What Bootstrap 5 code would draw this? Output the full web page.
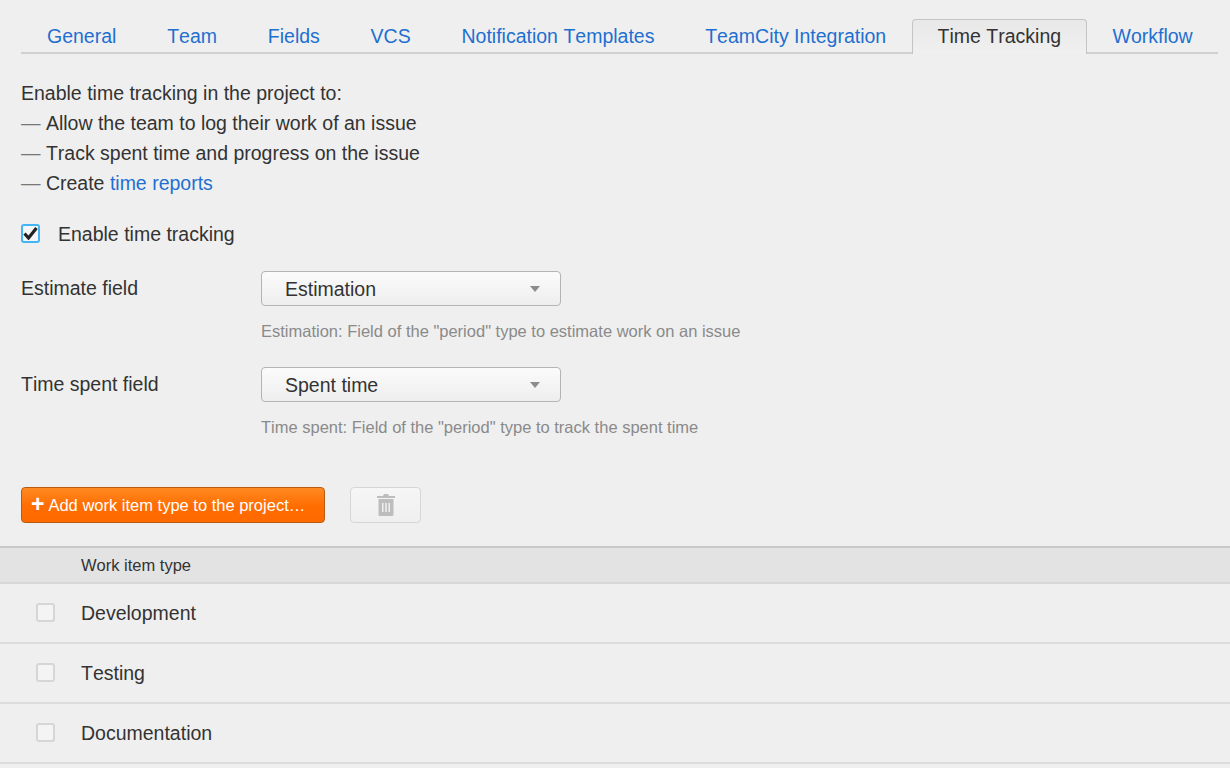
<!DOCTYPE html>
<html lang="en">
<head>
<meta charset="utf-8">
<title>Time Tracking</title>
<link href="https://cdn.jsdelivr.net/npm/bootstrap@5.3.0/dist/css/bootstrap.min.css" rel="stylesheet">
<style>
html,body{height:100%}
body{background:#efefef;color:#333;font-family:"Liberation Sans",Arial,sans-serif;font-size:19.5px;line-height:30px;overflow:hidden;font-kerning:none}
a{color:#1f6fd0;text-decoration:none}
.tabbar{margin:18px 12px 0 21px;height:36px;border-bottom:2px solid #d0d0d0;flex-wrap:nowrap;white-space:nowrap}
.tabbar .nav-link{color:#1f6fd0;font-size:19.5px;line-height:30px;height:36px;padding:3px 25.4px 2px 25.4px;border:0;border-radius:0;background:none;margin:0}
.tabbar .nav-item:first-child .nav-link{padding-left:26px}
.tabbar .nav-link.active{color:#333;padding:1px 25px 2px 25px;margin-top:1px;height:35px;border:1px solid #c4c4c4;border-bottom:0;border-radius:4px 4px 0 0;background:linear-gradient(#e8e8e8,#f0f0f0)}
.tabbar .nav-item:has(.active){margin-bottom:-2px}
.intro{margin:24px 0 0 21px}
.dash{color:#777}
.chk-row{margin:21px 0 0 21px;height:30px}
.chk{width:19px;height:19px;flex:none;border-radius:3px;background:#f4f4f4;border:2px solid #d6d6d6}
.chk-on{border:2px solid #45b4f5;background:#f6f6f6;margin-right:18px;margin-top:-1px}
.chk-on svg{flex:none}
.field-row{margin-left:21px}
.field-one{margin-top:22px}
.field-two{margin-top:24px}
.field-label{width:240px;flex:none;line-height:26px;padding-top:4px}
.picker{width:300px;height:35px;padding:1px 20px 0 23px;border:1px solid #b4b4b4;border-radius:4px;background:linear-gradient(#fbfbfb,#eeeeee);color:#333;font-size:19.5px;line-height:33px}
.caret{width:0;height:0;border-left:5px solid transparent;border-right:5px solid transparent;border-top:6px solid #8c8c8c;margin-bottom:1px}
.hint{color:#8a8a8a;font-size:16.5px;line-height:24px;margin-top:13px;white-space:nowrap}
.actions{margin:48px 0 0 21px}
.add-btn{width:304px;height:36px;padding:0 0 0 9px;border:1px solid #b85a10;border-radius:4px;background:linear-gradient(#ff8a22,#ff6c00 55%,#ff6a00);color:#fff;font-size:16.5px;line-height:34px;text-align:left;white-space:nowrap}
.add-btn:hover,.add-btn:active{background:linear-gradient(#ff8a22,#ff6c00 55%,#ff6a00);border-color:#b85a10;color:#fff}
.plus{font-size:23px;font-weight:700;vertical-align:-1px;margin-right:4px;line-height:20px}
.trash-btn{width:71px;height:36px;margin-left:25px;padding:0;border:1px solid #d6d6d6;border-radius:4px;background:linear-gradient(#f6f6f6,#efefef)}
.thead-row{margin-top:23px;height:38px;background:#e3e3e3;border-top:2px solid #c8c8c8;border-bottom:2px solid #d8d8d8;font-size:16.5px;line-height:34px;padding-left:81px}
.item-row{height:60px;border-bottom:2px solid #dcdcdc;padding-left:36px}
.item-row .chk{margin-right:26px;margin-top:-2px}
.item-row span{line-height:30px}
</style>
</head>
<body>
<ul class="nav nav-tabs tabbar">
  <li class="nav-item"><a class="nav-link" href="#">General</a></li>
  <li class="nav-item"><a class="nav-link" href="#">Team</a></li>
  <li class="nav-item"><a class="nav-link" href="#">Fields</a></li>
  <li class="nav-item"><a class="nav-link" href="#">VCS</a></li>
  <li class="nav-item"><a class="nav-link" href="#">Notification Templates</a></li>
  <li class="nav-item"><a class="nav-link" href="#">TeamCity Integration</a></li>
  <li class="nav-item"><a class="nav-link active" href="#">Time Tracking</a></li>
  <li class="nav-item"><a class="nav-link" href="#">Workflow</a></li>
</ul>
<div class="intro">
  <div>Enable time tracking in the project to:</div>
  <div><span class="dash">—</span> Allow the team to log their work of an issue</div>
  <div><span class="dash">—</span> Track spent time and progress on the issue</div>
  <div><span class="dash">—</span> Create <a href="#">time reports</a></div>
</div>
<div class="chk-row d-flex align-items-center">
  <span class="chk chk-on d-flex align-items-center justify-content-center">
    <svg width="15" height="13" viewBox="0 0 15 13"><path d="M1.500 6.500 L5.500 11 L13.500 1" fill="none" stroke="#222" stroke-width="3.200"/></svg>
  </span>
  <span>Enable time tracking</span>
</div>
<div class="field-row field-one d-flex">
  <div class="field-label">Estimate field</div>
  <div>
    <div class="picker d-flex align-items-center justify-content-between"><span>Estimation</span><span class="caret"></span></div>
    <div class="hint">Estimation: Field of the "period" type to estimate work on an issue</div>
  </div>
</div>
<div class="field-row field-two d-flex">
  <div class="field-label">Time spent field</div>
  <div>
    <div class="picker d-flex align-items-center justify-content-between"><span>Spent time</span><span class="caret"></span></div>
    <div class="hint">Time spent: Field of the "period" type to track the spent time</div>
  </div>
</div>
<div class="actions d-flex">
  <button type="button" class="btn add-btn"><span class="plus">+</span>Add work item type to the project…</button>
  <button type="button" class="btn trash-btn d-flex align-items-center justify-content-center">
    <svg width="18" height="22" viewBox="0 0 18 22"><path fill="#bdbdbd" d="M7 0h4l1 2h6v2H0V2h6zM1.500 5h15v15.500a1.500 1.500 0 0 1-1.500 1.500H3a1.500 1.500 0 0 1-1.500-1.500z"/><path fill="#efefef" d="M5 9h1.500v9H5zM8.250 9h1.500v9h-1.500zM11.500 9H13v9h-1.500z"/></svg>
  </button>
</div>
<div class="thead-row">Work item type</div>
<div class="item-row d-flex align-items-center"><span class="chk"></span><span>Development</span></div>
<div class="item-row d-flex align-items-center"><span class="chk"></span><span>Testing</span></div>
<div class="item-row d-flex align-items-center"><span class="chk"></span><span>Documentation</span></div>
<script src="https://cdn.jsdelivr.net/npm/bootstrap@5.3.0/dist/js/bootstrap.bundle.min.js"></script>
</body>
</html>
